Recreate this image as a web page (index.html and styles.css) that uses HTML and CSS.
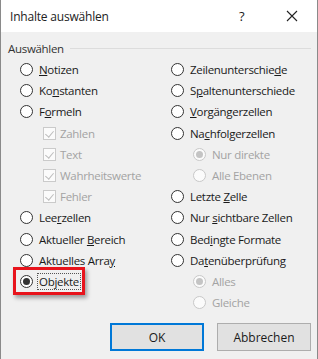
FILE: index.html
```html
<!DOCTYPE html>
<html lang="de">
<head>
  <meta charset="UTF-8" />
  <title>Inhalte auswählen</title>
  <link rel="stylesheet" href="styles.css">
</head>
<body>

  <div class="dialog">
    <div class="titlebar">
      <span class="title">Inhalte auswählen</span>
      <span class="help">?</span>
      <span class="close">
        <svg width="12" height="12" viewBox="0 0 12 12"><path d="M1 1L11 11M11 1L1 11" stroke="#222" stroke-width="1.1" fill="none"/></svg>
      </span>
    </div>

    <div class="content">
      <div class="group-head">
        <span>Auswählen</span>
        <div class="group-line"></div>
      </div>

      <div class="columns">
        <div class="col">
          <div class="row"><span class="radio"></span><span class="lbl"><u>N</u>otizen</span></div>
          <div class="row"><span class="radio"></span><span class="lbl">Ko<u>n</u>stanten</span></div>
          <div class="row"><span class="radio"></span><span class="lbl">F<u>o</u>rmeln</span></div>
          <div class="row sub"><span class="check"></span><span class="lbl">Zahlen</span></div>
          <div class="row sub"><span class="check"></span><span class="lbl">Text</span></div>
          <div class="row sub"><span class="check"></span><span class="lbl">Wahrheitswerte</span></div>
          <div class="row sub"><span class="check"></span><span class="lbl">Fehler</span></div>
          <div class="row"><span class="radio"></span><span class="lbl">Lee<u>r</u>zellen</span></div>
          <div class="row"><span class="radio"></span><span class="lbl">Aktueller <u>B</u>ereich</span></div>
          <div class="row"><span class="radio"></span><span class="lbl">Aktuelles Arra<u>y</u></span></div>
          <div class="row marked">
            <span class="radio on"></span><span class="lbl focus">Objekte</span>
            <div class="highlight"></div>
          </div>
        </div>

        <div class="col">
          <div class="row"><span class="radio"></span><span class="lbl">Zeilenunterschie<u>d</u>e</span></div>
          <div class="row"><span class="radio"></span><span class="lbl">S<u>p</u>altenunterschiede</span></div>
          <div class="row"><span class="radio"></span><span class="lbl"><u>V</u>orgängerzellen</span></div>
          <div class="row"><span class="radio"></span><span class="lbl">Na<u>c</u>hfolgerzellen</span></div>
          <div class="row sub2"><span class="radio off on"></span><span class="lbl">Nur direkte</span></div>
          <div class="row sub2"><span class="radio off"></span><span class="lbl">Alle Ebenen</span></div>
          <div class="row"><span class="radio"></span><span class="lbl">Letzte <u>Z</u>elle</span></div>
          <div class="row"><span class="radio"></span><span class="lbl">Nur <u>s</u>ichtbare Zellen</span></div>
          <div class="row"><span class="radio"></span><span class="lbl">Bed<u>i</u>ngte Formate</span></div>
          <div class="row"><span class="radio"></span><span class="lbl">Da<u>t</u>enüberprüfung</span></div>
          <div class="row sub2"><span class="radio off on"></span><span class="lbl">Alles</span></div>
          <div class="row sub2"><span class="radio off"></span><span class="lbl">Gleiche</span></div>
        </div>
      </div>

      <div class="buttons">
        <button class="btn default">OK</button>
        <button class="btn">Abbrechen</button>
      </div>
    </div>
  </div>

</body>
</html>
```

FILE: styles.css
```css
body { margin: 0; font-family: "Open Sans", "Noto Sans", sans-serif; font-size: 11.5px; letter-spacing: -0.3px; color: #1a1a1a; background: #f0f0f0; }

.dialog {
  width: 318px;
  height: 359px;
  box-sizing: border-box;
  border-left: 1px solid #8a8a8a;
  border-right: 1px solid #8a8a8a;
  background: #f0f0f0;
  display: flex;
  flex-direction: column;
}

.titlebar { height: 32px; background: #fff; display: flex; align-items: center; }
.title { padding-left: 9px; font-size: 12px; letter-spacing: -0.2px; color: #222; flex: 1; }
.help { width: 10px; margin-right: 37px; font-size: 13px; }
.close { width: 12px; height: 12px; margin-right: 19px; display: flex; }

.content { flex: 1; padding: 7px 6px 0 7px; display: flex; flex-direction: column; }

.group-head { display: flex; align-items: center; height: 18px; color: #333; }
.group-line { flex: 1; height: 1px; background: #dcdcdc; margin-left: 6px; margin-right: 0; }

.columns { display: flex; padding-top: 2px; }
.col { display: flex; flex-direction: column; }
.col:first-child { width: 138px; padding-left: 12px; }
.col:last-child { padding-left: 13px; }

.row { height: 21.2px; display: flex; align-items: center; position: relative; }
.row .lbl { margin-left: 6px; white-space: nowrap; }
.row u { text-underline-offset: 1px; }
.row.sub { padding-left: 23px; }
.row.sub .lbl { margin-left: 4px; color: #a3a3a3; }
.row.sub2 { padding-left: 22px; }
.row.sub2 .lbl { color: #a3a3a3; }

.radio {
  width: 13px;
  height: 13px;
  box-sizing: border-box;
  border: 1px solid #333;
  border-radius: 50%;
  background: #fff;
  display: flex;
  align-items: center;
  justify-content: center;
  flex: none;
}
.radio.on::after { content: ""; width: 7px; height: 7px; border-radius: 50%; background: #333; }
.radio.off { border-color: #c8c8c8; background: #fbfbfb; }
.radio.off.on::after { background: #c4c4c4; }

.check {
  width: 13px;
  height: 13px;
  box-sizing: border-box;
  border: 1px solid #cacaca;
  background: #fbfbfb;
  position: relative;
  flex: none;
}
.check::after {
  content: "";
  position: absolute;
  left: 3px;
  top: 1px;
  width: 4px;
  height: 7px;
  border-right: 1px solid #bdbdbd;
  border-bottom: 1px solid #bdbdbd;
  transform: rotate(40deg);
}

.focus { outline: 1px dotted #555; outline-offset: 0; padding: 0 1px; margin-left: 5px !important; }

.highlight {
  position: absolute;
  left: -7px;
  top: -4px;
  width: 72px;
  height: 28px;
  box-sizing: border-box;
  border: 3px solid #e8141c;
  box-shadow: 2px 3px 4px rgba(0, 0, 0, 0.35);
  pointer-events: none;
}

.buttons { margin-top: auto; margin-bottom: 8px; display: flex; justify-content: flex-end; gap: 13px; padding-right: 0; }
.btn {
  width: 94px;
  height: 28px;
  font-family: inherit;
  font-size: 12px;
  letter-spacing: 0;
  color: #1a1a1a;
  background: #e1e1e1;
  border: 1px solid #adadad;
}
.btn.default { border: 2px solid #0078d7; }
```
